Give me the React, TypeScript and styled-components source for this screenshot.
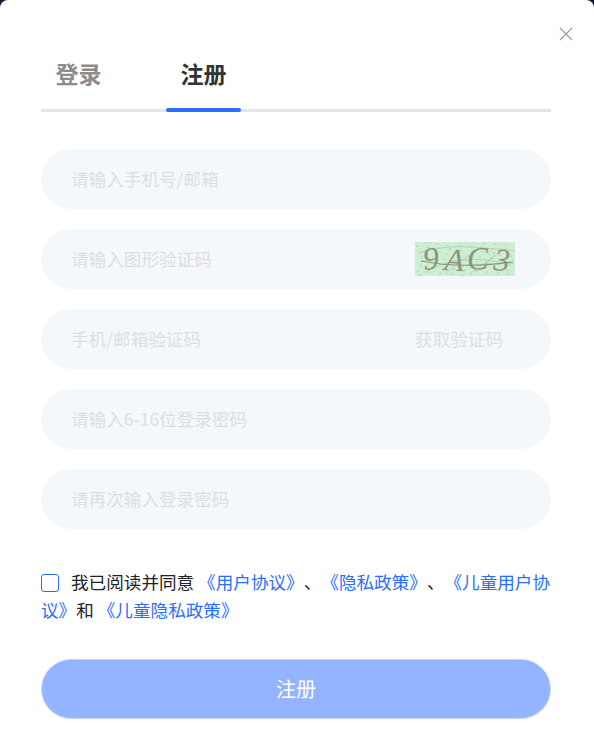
import React from "react";
import styled, { createGlobalStyle } from "styled-components";

const Global = createGlobalStyle`
  html, body { margin: 0; padding: 0; background: #14162e; }
  * { box-sizing: border-box; }
`;

const Modal = styled.div`
  position: relative;
  width: 594px;
  height: 747px;
  overflow: hidden;
  background: #fff;
  border-radius: 8px 8px 0 0;
  padding: 56px 43px 0 41px;
  font-family: "Noto Sans CJK SC", "Microsoft YaHei", sans-serif;
  text-spacing-trim: space-all;
`;

const Close = styled.button`
  position: absolute;
  top: 27px;
  right: 21px;
  width: 14px;
  height: 14px;
  padding: 0;
  border: 0;
  background: none;
  display: block;
`;

const Tabs = styled.div`
  display: flex;
  height: 56px;
  border-bottom: 3px solid #e3e5ed;
`;

const Tab = styled.div<{ $active?: boolean }>`
  position: relative;
  width: 75px;
  margin-right: ${(p) => (p.$active ? 0 : 50)}px;
  text-align: center;
  font-size: 23px;
  line-height: 35px;
  height: 53px;
  font-weight: 700;
  color: ${(p) => (p.$active ? "#333333" : "#8c8c8c")};
  &::after {
    content: "";
    display: ${(p) => (p.$active ? "block" : "none")};
    position: absolute;
    left: 0;
    right: 0;
    bottom: -3px;
    height: 4px;
    border-radius: 2px;
    background: #2a6dff;
  }
`;

const Fields = styled.div`
  display: flex;
  flex-direction: column;
  gap: 20px;
  margin-top: 37px;
`;

const Field = styled.div`
  height: 60px;
  border-radius: 30px;
  background: #f5f8fb;
  padding: 0 36px 2px 30px;
  display: flex;
  align-items: center;
  justify-content: space-between;
`;

const Placeholder = styled.span`
  font-size: 17.6px;
  color: #dcdee3;
`;

const SendCode = styled.span`
  font-size: 17.6px;
  color: #dcdee3;
  width: 100px;
`;

const CaptchaSlot = styled.span`
  display: block;
  width: 100px;
  height: 34px;
  flex: none;
  margin-bottom: -2px;
`;

const Captcha = styled.svg`
  display: block;
  width: 100px;
  height: 34px;
`;

const Agreement = styled.div`
  position: relative;
  margin-top: 39px;
  font-size: 17.6px;
  line-height: 28px;
  color: #222;
`;

const Check = styled.span`
  display: inline-block;
  width: 18px;
  height: 18px;
  border: 1px solid #2a6dff;
  border-radius: 3px;
  vertical-align: -3px;
  margin-right: 12px;
  background: #fff;
`;

const Link = styled.a`
  color: #2a6dff;
`;

const Submit = styled.button`
  display: block;
  width: 100%;
  height: 60px;
  margin-top: 35px;
  padding: 0 0 2px;
  border-radius: 30px;
  border: 1px solid #c4d6ff;
  background: #94b4ff;
  color: #fff;
  font-family: inherit;
  font-size: 20px;
`;

const dots = Array.from({ length: 70 }, (_, i) => ({
  x: (i * 37) % 100,
  y: (i * 23) % 34,
}));

export default function App() {
  return (
    <Modal>
      <Global />
      <Close aria-label="关闭">
        <svg width="14" height="14" viewBox="0 0 14 14">
          <path d="M1 1l12 12M13 1L1 13" stroke="#9a9a9a" strokeWidth="1.1" fill="none" />
        </svg>
      </Close>
      <Tabs>
        <Tab>登录</Tab>
        <Tab $active>注册</Tab>
      </Tabs>
      <Fields>
        <Field><Placeholder>请输入手机号/邮箱</Placeholder></Field>
        <Field>
          <Placeholder>请输入图形验证码</Placeholder>
          <CaptchaSlot>
            <Captcha viewBox="0 0 100 34">
              <rect width="100" height="34" fill="#cdeed4" />
              {dots.map((d, i) => (
                <circle key={i} cx={d.x} cy={d.y} r="0.5" fill="#7d9a86" />
              ))}
              <path d="M3 11Q30 3 55 5T98 8M10 30Q40 14 70 18T98 21M30 32Q45 18 62 9M55 32Q70 20 92 6" stroke="#a5bdb0" strokeWidth="0.6" fill="none" />
              <text x="9" y="28" fontFamily="Liberation Serif, serif" fontStyle="italic" fontSize="32" fill="#8d9576" rotate="-6 4 -3 5" letterSpacing="4">9AC3</text>
              <path d="M6 19Q45 27 98 20" stroke="#8d9576" strokeWidth="1.2" fill="none" />
            </Captcha>
          </CaptchaSlot>
        </Field>
        <Field>
          <Placeholder>手机/邮箱验证码</Placeholder>
          <SendCode>获取验证码</SendCode>
        </Field>
        <Field><Placeholder>请输入6-16位登录密码</Placeholder></Field>
        <Field><Placeholder>请再次输入登录密码</Placeholder></Field>
      </Fields>
      <Agreement>
        <Check />我已阅读并同意 <Link>《用户协议》</Link>、<Link>《隐私政策》</Link>、<Link>《儿童用户协议》</Link>和 <Link>《儿童隐私政策》</Link>
      </Agreement>
      <Submit>注册</Submit>
    </Modal>
  );
}
